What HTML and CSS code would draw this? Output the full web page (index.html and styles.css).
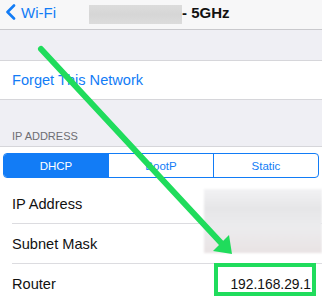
FILE: index.html
```html
<!DOCTYPE html>
<html lang="en">
<head>
    <meta charset="UTF-8">
    <title>Wi-Fi</title>
    <link rel="stylesheet" href="styles.css">
</head>

<body>
    <div class="screen">
        <div class="navbar">
            <div class="back">
                <svg width="11" height="16" viewBox="0 0 11 16">
                    <path d="M9 1.5 L2.5 8 L9 14.5" fill="none" stroke="#127cf6" stroke-width="2.6" stroke-linecap="round" stroke-linejoin="round"/>
                </svg>
                <span>Wi-Fi</span>
            </div>
            <div class="title">
                <span class="blur-name"></span>
                <span>- 5GHz</span>
            </div>
        </div>

        <div class="gap"></div>

        <div class="group">
            <div class="row link">Forget This Network</div>
        </div>

        <div class="caption">IP ADDRESS</div>

        <div class="group last">
            <div class="segments">
                <div class="seg active">DHCP</div>
                <div class="seg">BootP</div>
                <div class="seg">Static</div>
            </div>
            <div class="row">IP Address</div>
            <div class="row">Subnet Mask</div>
            <div class="row">Router<span class="value">192.168.29.1</span></div>
        </div>

        <!-- smudged values -->
        <div class="blur-values"></div>

        <!-- annotation -->
        <svg class="mark" width="322" height="301" viewBox="0 0 322 301">
            <line x1="41" y1="49" x2="223" y2="245" stroke="#20dc5c" stroke-width="6" stroke-linecap="round"/>
            <polygon points="232,254 213,251 229,235" fill="#20dc5c"/>
            <rect x="216" y="265" width="98" height="29" fill="none" stroke="#20dc5c" stroke-width="4"/>
        </svg>
    </div>
</body>

</html>
```

FILE: styles.css
```css
body {
    margin: 0;
    font-family: "Liberation Sans", Arial, sans-serif;
    background-color: #efeff4;
}

.screen {
    position: relative;
    width: 322px;
    height: 301px;
    overflow: hidden;
    background-color: #efeff4;
}

.navbar {
    height: 30px;
    background-color: #f7f7f8;
    border-bottom: 1px solid #c9c9cd;
    display: flex;
    align-items: center;
    box-sizing: border-box;
    padding-bottom: 5px;
}

.back {
    display: flex;
    align-items: center;
    gap: 5px;
    padding-left: 5px;
    color: #127cf6;
    font-size: 15px;
    width: 84px;
}

.title {
    display: flex;
    align-items: center;
    font-size: 15px;
    font-weight: bold;
    color: #111;
}

.blur-name {
    display: block;
    width: 93px;
    height: 19px;
    margin-top: 4px;
    background: linear-gradient(180deg, #dcdcdc, #d6d6d6 50%, #dcdcdc);
    filter: blur(0.6px);
}

.gap {
    height: 30px;
}

.group {
    background-color: #fff;
    border-top: 1px solid #d6d6da;
    border-bottom: 1px solid #d6d6da;
}

.group.last {
    border-bottom: none;
    padding-top: 6px;
}

.row {
    height: 39px;
    margin-left: 12px;
    padding-right: 11px;
    display: flex;
    align-items: center;
    justify-content: space-between;
    font-size: 14.6px;
    color: #111;
    border-bottom: 1px solid #dcdce0;
}

.row:last-child {
    border-bottom: none;
}

.link {
    color: #127cf6;
    height: 38px;
    border-bottom: none;
}

.value {
    font-size: 13.8px;
    padding-top: 2px;
}

.caption {
    height: 46px;
    box-sizing: border-box;
    padding: 30px 0 0 12px;
    font-size: 11px;
    color: #6d6d72;
}

.segments {
    display: flex;
    margin: 0 3px 6px 3px;
    height: 25px;
    border: 1px solid #127cf6;
    border-radius: 4px;
    overflow: hidden;
    box-sizing: border-box;
}

.seg {
    flex: 1;
    display: flex;
    align-items: center;
    justify-content: center;
    font-size: 11.5px;
    color: #127cf6;
    border-left: 1px solid #127cf6;
}

.seg:first-child {
    border-left: none;
}

.seg.active {
    background-color: #127cf6;
    color: #fff;
}

.blur-values {
    position: absolute;
    left: 204px;
    top: 189px;
    width: 118px;
    height: 64px;
    background: linear-gradient(180deg, #f2f2f4 0%, #e6e6e8 30%, #ececee 60%, #e9e3e4 100%);
    filter: blur(1px);
}

.mark {
    position: absolute;
    left: 0;
    top: 0;
}
```
